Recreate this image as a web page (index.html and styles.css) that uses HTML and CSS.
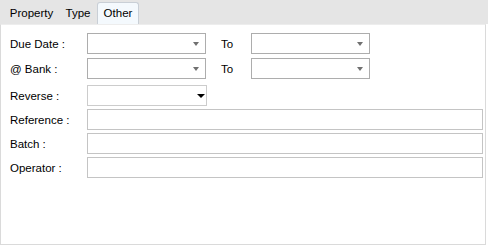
FILE: index.html
```html
<!DOCTYPE html>
<html lang="en">
<head>
    <meta charset="UTF-8">
    <title>Search Filter</title>
    <link rel="stylesheet" href="styles.css">
</head>
<body>
    <div class="tabs">
        <div class="tab tab-property">Property</div>
        <div class="tab tab-type">Type</div>
        <div class="tab tab-other active">Other</div>
    </div>
    <div class="page">
        <div class="row row-combo">
            <label class="label">Due Date :</label>
            <div class="combo"><span class="arrow"></span></div>
            <label class="to">To</label>
            <div class="combo"><span class="arrow"></span></div>
        </div>
        <div class="row row-combo">
            <label class="label">@ Bank :</label>
            <div class="combo"><span class="arrow"></span></div>
            <label class="to">To</label>
            <div class="combo"><span class="arrow"></span></div>
        </div>
        <div class="row row-reverse">
            <label class="label">Reverse :</label>
            <div class="combo combo-list"><span class="arrow"></span></div>
        </div>
        <div class="row row-text">
            <label class="label">Reference :</label>
            <input type="text" class="field">
        </div>
        <div class="row row-text">
            <label class="label">Batch :</label>
            <input type="text" class="field">
        </div>
        <div class="row row-text">
            <label class="label">Operator :</label>
            <input type="text" class="field">
        </div>
    </div>
</body>
</html>
```

FILE: styles.css
```css
body {
    margin: 0;
    width: 488px;
    height: 246px;
    background: #ffffff;
    font-family: "Liberation Sans", Arial, sans-serif;
    font-size: 11.5px;
    color: #000000;
    overflow: hidden;
}
.tabs {
    display: flex;
    align-items: flex-end;
    height: 24px;
    padding-left: 4px;
    background: #e5e5e5;
}
.tab {
    height: 21px;
    line-height: 21px;
    text-align: center;
    box-sizing: border-box;
}
.tab-property { width: 55px; }
.tab-type { width: 38px; }
.tab-other { width: 42px; }
.tab.active {
    height: 22px;
    background: #f4f9fd;
    border: 1px solid #c9cfd6;
    border-bottom: none;
    border-radius: 3px 3px 0 0;
    line-height: 20px;
}
.page {
    box-sizing: border-box;
    width: 486px;
    height: 221px;
    border: 1px solid #dadada;
    border-top-color: #ededed;
    padding: 8px 0 0 9px;
    display: flex;
    flex-direction: column;
}
.row {
    display: flex;
    align-items: center;
    height: 21px;
}
.row-combo + .row-combo { margin-top: 4px; }
.row-reverse { margin-top: 6px; }
.row-text { margin-top: 3px; }
.label {
    width: 77px;
    flex-shrink: 0;
}
.to {
    width: 30px;
    padding-left: 15px;
}
.combo {
    position: relative;
    box-sizing: border-box;
    width: 119px;
    height: 21px;
    border: 1px solid #adadad;
    background: #ffffff;
}
.combo .arrow {
    position: absolute;
    right: 6px;
    top: 8px;
    width: 0;
    height: 0;
    border-left: 3.5px solid transparent;
    border-right: 3.5px solid transparent;
    border-top: 4px solid #707070;
}
.combo-list {
    width: 120px;
    border-color: #cccccc;
}
.combo-list .arrow {
    right: 1px;
    border-left-width: 4px;
    border-right-width: 4px;
    border-top: 4px solid #000000;
}
.field {
    box-sizing: border-box;
    width: 396px;
    height: 21px;
    margin: 0;
    padding: 0;
    border: 1px solid #c4c4c4;
    background: #ffffff;
}
```
